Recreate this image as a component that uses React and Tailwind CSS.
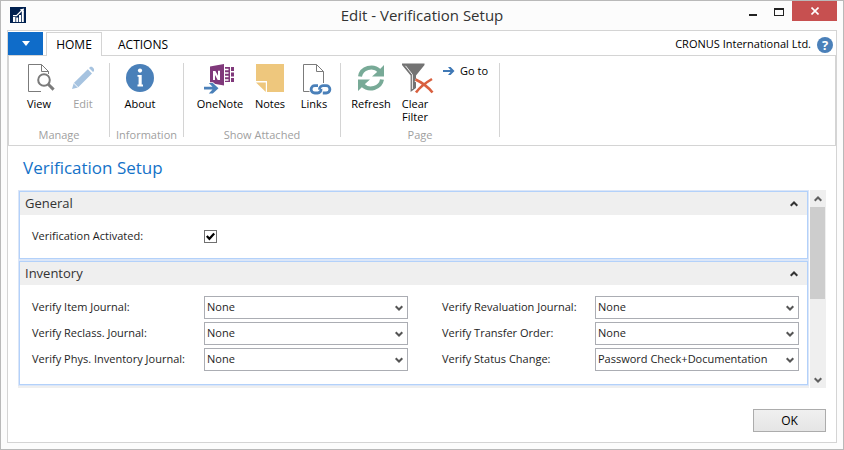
import { useState } from "react";

function Chevron({ up = false, className = "" }) {
  return (
    <svg
      viewBox="0 0 8 6"
      className={`h-[6px] w-[8px] shrink-0 ${className}`}
      fill="none"
      stroke="currentColor"
      strokeWidth="2"
      aria-hidden="true"
    >
      <path d={up ? "M0.7 4.8 4 1.5 7.3 4.8" : "M0.7 1.2 4 4.5 7.3 1.2"} />
    </svg>
  );
}

function AppLogo() {
  return (
    <svg viewBox="0 0 16 16" className="h-4 w-4" aria-hidden="true">
      <rect width="16" height="16" fill="#00204f" />
      <path d="M3 10h2.4v5H3zM6.2 10.5h2v4.5h-2zM9 8h2v7H9zM11.8 4h2v11h-2z" fill="#fff" />
      <path d="M3 8.6 6.5 8.6 12.2 3" stroke="#fff" strokeWidth="1.2" fill="none" />
      <path d="M9.8 2.4 14 1.6 13.4 5.4z" fill="#fff" />
    </svg>
  );
}

function Icon({ children }) {
  return (
    <svg viewBox="0 0 28 28" className="h-7 w-7 shrink-0 overflow-visible" fill="none" aria-hidden="true">
      {children}
    </svg>
  );
}

const ViewIcon = () => (
  <Icon>
    <path d="M16 27.5H3.5V.5H16.5L23.5 7.5V10M16.5.5V7.5H23.5" stroke="#7b7b7b" />
    <circle cx="19" cy="16" r="5.8" stroke="#7b7b7b" strokeWidth="2" fill="#fff" />
    <path d="M23 20 28.6 25.6" stroke="#7b7b7b" strokeWidth="3" />
  </Icon>
);

const EditIcon = () => (
  <Icon>
    <path d="M3 25 4.8 19 18.8 5.2 23 9.4 9 23.4z" fill="#a6c3e0" />
    <path d="M20 4 21.3 2.8H23L25 4.8V7L24 8z" fill="#a6c3e0" />
    <path d="M4.2 18.6 9.6 24" stroke="#fff" />
  </Icon>
);

const AboutIcon = () => (
  <Icon>
    <circle cx="14" cy="14" r="14" fill="#4a80b9" />
    <circle cx="14" cy="6.6" r="2.1" fill="#fff" />
    <path d="M11.5 11H15.7V20.6H17V22.4H11.5V20.6H12.6V12.8H11.5z" fill="#fff" />
  </Icon>
);

const OneNoteIcon = () => (
  <Icon>
    <path d="M19 3H24V18H19z" fill="#80397b" />
    <path d="M25 3H28V7H25zM25 8.500H28V12.500H25zM25 14H28V18H25z" fill="#80397b" />
    <path d="M19 5.500H22.500M19 9H22.500M19 12.500H22.500M19 16H22.500" stroke="#fff" strokeWidth="1.500" />
    <path d="M4 2.500 18 0V21.500L4 19z" fill="#80397b" />
    <path d="M7 7H9.400L12 11.800V6.800H14V16H11.700L9 11V16H7z" fill="#fff" />
    <path d="M-2 22.800H6.500L2.800 19H6.800L12.500 24.200 6.800 29.400H2.800L6.500 25.600H-2z" fill="#4a80b9" stroke="#fff" strokeWidth="1.600" paintOrder="stroke" />
  </Icon>
);

const NotesIcon = () => (
  <Icon>
    <path d="M0 0H28V28H11V17H0z" fill="#eec77d" />
    <path d="M0 18.5H9.8V28z" fill="#eec77d" />
  </Icon>
);

const LinksIcon = () => (
  <Icon>
    <path d="M9.5 27.5H3.5V.5H16.5L23.5 7.5V19M16.5.5V7.5H23.5" stroke="#7b7b7b" />
    <path d="M18 21.600H14.800A3.700 3.700 0 0 0 14.800 29H17.600A3.600 3.600 0 0 0 21 25" stroke="#4a80b9" strokeWidth="2.800" />
    <path d="M22.800 29H26.200A3.700 3.700 0 0 0 26.200 21.600H23A3.600 3.600 0 0 0 19.500 25.600" stroke="#4a80b9" strokeWidth="2.800" />
  </Icon>
);

const RefreshIcon = () => (
  <Icon>
    <path d="M3 12.500A11.300 10.500 0 0 1 22.500 7" stroke="#78aa97" strokeWidth="4" />
    <path d="M27 1V12.400H15L19.500 8.500z" fill="#78aa97" />
    <path d="M25 15.500A11.300 10.500 0 0 1 5.500 21" stroke="#78aa97" strokeWidth="4" />
    <path d="M1 27V15.600H13L8.500 19.500z" fill="#78aa97" />
  </Icon>
);

const ClearFilterIcon = () => (
  <Icon>
    <path d="M1 -.5H23.5V1L15 11.5V24L9.6 28V11.5L1 1z" fill="#737373" />
    <path d="M4.5 1.8 11.4 10.6V25" stroke="#fff" strokeWidth=".9" />
    <path d="M14.5 15.5C20 18 27 23 31.5 28.5M31 15C25 18.500 19 23 15 28.500" stroke="#fff" strokeWidth="4.500" />
    <path d="M14.500 15.500C20 18 27 23 31.500 28.500M31 15C25 18.500 19 23 15 28.500" stroke="#d9603f" strokeWidth="2.600" />
  </Icon>
);

function RibbonButton({ icon, label, wide = false, disabled = false }) {
  return (
    <button
      type="button"
      disabled={disabled}
      className={`flex flex-col items-center gap-[5px] leading-[13px] ${wide ? "w-14" : "w-11"} ${
        disabled ? "text-[#a0a0a0]" : "text-black"
      }`}
    >
      {icon}
      <span>{label}</span>
    </button>
  );
}

function RibbonGroup({ title, className, children }) {
  return (
    <section className={`flex h-[74px] flex-col justify-between border-r border-[#d4d4d4] ${className}`}>
      <div className="flex items-start pt-px pl-2">{children}</div>
      <h2 className="text-center leading-[5px] text-[#a0a0a0]">{title}</h2>
    </section>
  );
}

function FastTab({ title, children }) {
  const [open, setOpen] = useState(true);
  return (
    <section className="border border-[#dbe6f8]">
      <div className="border border-[#b3d1fa] bg-white">
        <h2>
          <button
            type="button"
            aria-expanded={open}
            onClick={() => setOpen(!open)}
            className="flex h-[23px] w-full items-center justify-between bg-[#efefef] pr-[9px] pl-[5px] text-[13px] text-[#333]"
          >
            {title}
            <Chevron up={open} className="text-[#333]" />
          </button>
        </h2>
        {open && children}
      </div>
    </section>
  );
}

const OPTIONS = ["None", "Password Check", "Documentation", "Password Check+Documentation"];

function SelectField({ id, label, value }) {
  return (
    <div className="flex h-[23px] items-center">
      <label htmlFor={id} className="min-w-0 flex-1 whitespace-nowrap">
        {label}
      </label>
      <div className="relative w-[204px]">
        <select
          id={id}
          defaultValue={value}
          className="block h-[23px] w-full appearance-none border border-[#abadb3] bg-white pr-5 pl-[2px] text-[#1e1e1e]"
        >
          {OPTIONS.map((option) => (
            <option key={option}>{option}</option>
          ))}
        </select>
        <Chevron className="pointer-events-none absolute top-[9px] right-[5px] text-[#555]" />
      </div>
    </div>
  );
}

const LEFT_FIELDS = [
  ["item-journal", "Verify Item Journal:", "None"],
  ["reclass-journal", "Verify Reclass. Journal:", "None"],
  ["phys-journal", "Verify Phys. Inventory Journal:", "None"],
];

const RIGHT_FIELDS = [
  ["revaluation-journal", "Verify Revaluation Journal:", "None"],
  ["transfer-order", "Verify Transfer Order:", "None"],
  ["status-change", "Verify Status Change:", "Password Check+Documentation"],
];

function FieldColumn({ fields }) {
  return (
    <div className="flex flex-col gap-[3px]">
      {fields.map(([id, label, value]) => (
        <SelectField key={id} id={id} label={label} value={value} />
      ))}
    </div>
  );
}

export default function App() {
  const [activated, setActivated] = useState(true);

  return (
    <div className="flex min-h-screen flex-col border border-[#b9b9b9] bg-[#fcfcfc] px-[6px] pb-[6px] font-['Open_Sans','Noto_Sans',sans-serif] text-[11px] text-[#1e1e1e]">
      <header className="grid h-[29px] grid-cols-[1fr_auto_1fr] items-start">
        <div className="pt-[6px] pl-[3px]">
          <AppLogo />
        </div>
        <h1 className="text-[15px] leading-[29px] text-[#333]">Edit - Verification Setup</h1>
        <div className="flex justify-end">
          <button type="button" aria-label="Minimize" className="flex h-5 w-[26px] items-center justify-center pt-[7px]">
            <span className="h-[2px] w-2 bg-[#222]" />
          </button>
          <button type="button" aria-label="Maximize" className="flex h-5 w-[26px] items-center justify-center pt-[2px]">
            <span className="h-2 w-[10px] border border-t-2 border-[#222]" />
          </button>
          <button type="button" aria-label="Close" className="flex h-5 w-[45px] items-center justify-center bg-[#c75050]">
            <svg viewBox="0 0 8 8" className="h-2 w-2" stroke="#fff" strokeWidth="1.6" aria-hidden="true">
              <path d="M.5.5 7.5 7.5M7.500.5.5 7.500" />
            </svg>
          </button>
        </div>
      </header>

      <main className="flex flex-1 flex-col border border-[#d4d4d4] bg-white">
        <nav className="flex h-6 items-end pt-px">
          <button
            type="button"
            aria-label="Application menu"
            className="flex h-[23px] w-[35px] items-center justify-center bg-[#0f6cc9]"
          >
            <svg viewBox="0 0 8 5" className="h-[5px] w-2" fill="#fff" aria-hidden="true">
              <path d="M0 0H8L4 5z" />
            </svg>
          </button>
          <button
            type="button"
            className="z-10 -mb-px ml-[3px] h-6 w-14 border border-b-0 border-[#d4d4d4] bg-white text-[12px] text-black"
          >
            HOME
          </button>
          <button type="button" className="h-[23px] px-4 pt-[2px] text-[12px] text-black">
            ACTIONS
          </button>
          <div className="ml-auto flex h-[23px] items-center gap-[6px] pt-[2px] pr-[3px] text-black">
            CRONUS International Ltd.
            <button
              type="button"
              aria-label="Help"
              className="h-4 w-4 rounded-full bg-[#4a80b9] text-center text-[13px] leading-4 font-bold text-white"
            >
              ?
            </button>
          </div>
        </nav>

        <div className="flex h-[91px] items-start border border-[#d4d4d4] pt-[7px]">
          <RibbonGroup title="Manage" className="w-[101px]">
            <RibbonButton icon={<ViewIcon />} label="View" />
            <RibbonButton icon={<EditIcon />} label="Edit" disabled />
          </RibbonGroup>
          <RibbonGroup title="Information" className="w-[74px]">
            <RibbonButton icon={<AboutIcon />} label="About" />
          </RibbonGroup>
          <RibbonGroup title="Show Attached" className="w-[157px]">
            <RibbonButton icon={<OneNoteIcon />} label="OneNote" wide />
            <RibbonButton icon={<NotesIcon />} label="Notes" />
            <RibbonButton icon={<LinksIcon />} label="Links" />
          </RibbonGroup>
          <RibbonGroup title="Page" className="w-[159px]">
            <RibbonButton icon={<RefreshIcon />} label="Refresh" />
            <RibbonButton icon={<ClearFilterIcon />} label="Clear Filter" />
            <button type="button" className="flex items-center gap-[5px] pl-[6px] leading-[13px] text-black">
              <svg viewBox="0 0 12 8" className="h-2 w-3" fill="#3f78b5" aria-hidden="true">
                <path d="M0 3H7.500L5 0H7.600L11.500 4 7.600 8H5L7.500 5H0z" />
              </svg>
              Go to
            </button>
          </RibbonGroup>
        </div>

        <div className="flex flex-1 flex-col pr-[10px] pb-[10px] pl-[10px]">
          <h1 className="pl-[5px] text-[17px] leading-[44px] text-[#1472c8]">Verification Setup</h1>

          <div className="flex gap-px">
            <div className="min-w-0 flex-1 border-b-2 border-[#efefef]">
              <FastTab title="General">
                <div className="flex h-[43px] items-center px-3">
                  <label htmlFor="activated" className="w-[172px]">
                    Verification Activated:
                  </label>
                  <span className="relative flex h-[13px] w-[13px]">
                    <input
                      id="activated"
                      type="checkbox"
                      checked={activated}
                      onChange={() => setActivated(!activated)}
                      className="h-[13px] w-[13px] appearance-none border border-[#707070] bg-white"
                    />
                    {activated && (
                      <svg
                        viewBox="0 0 13 13"
                        className="pointer-events-none absolute inset-0"
                        fill="none"
                        stroke="#000"
                        strokeWidth="2.200"
                        aria-hidden="true"
                      >
                        <path d="M2.800 6 5.400 8.800 10.200 3.600" />
                      </svg>
                    )}
                  </span>
                </div>
              </FastTab>
              <FastTab title="Inventory">
                <div className="grid grid-cols-[376fr_357fr] gap-x-[34px] pt-[11px] pr-2 pb-[13px] pl-3">
                  <FieldColumn fields={LEFT_FIELDS} />
                  <FieldColumn fields={RIGHT_FIELDS} />
                </div>
              </FastTab>
            </div>
            <div className="flex w-4 flex-col bg-[#efefef]">
              <button type="button" aria-label="Scroll up" className="flex h-[17px] items-center justify-center text-[#606060]">
                <Chevron up />
              </button>
              <div className="mr-px h-[92px] bg-[#cdcdcd]" />
              <button
                type="button"
                aria-label="Scroll down"
                className="mt-auto flex h-[17px] items-center justify-center text-[#606060]"
              >
                <Chevron />
              </button>
            </div>
          </div>

          <div className="mt-auto flex justify-end">
            <button
              type="button"
              className="h-[23px] w-[73px] border border-[#acacac] bg-linear-to-b from-[#f0f0f0] to-[#e5e5e5] text-[12px] text-black"
            >
              OK
            </button>
          </div>
        </div>
      </main>
    </div>
  );
}
